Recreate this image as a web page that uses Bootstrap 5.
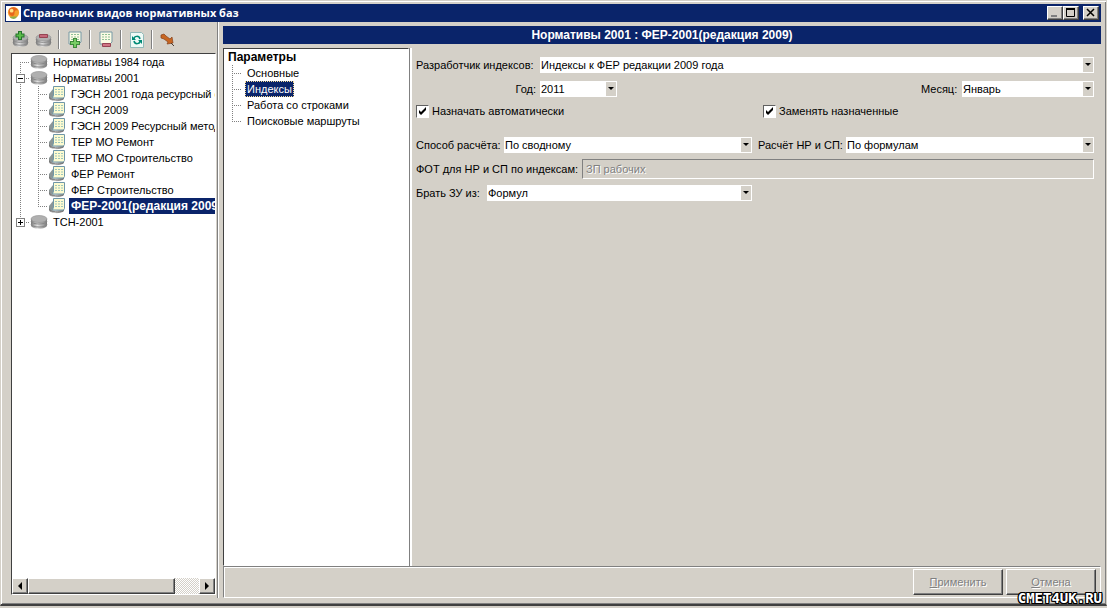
<!DOCTYPE html>
<html lang="ru">
<head>
<meta charset="utf-8">
<meta name="viewport" content="width=device-width, initial-scale=1">
<title>Справочник видов нормативных баз</title>
<link href="https://cdn.jsdelivr.net/npm/bootstrap@5.3.0/dist/css/bootstrap.min.css" rel="stylesheet">
<script src="https://cdn.jsdelivr.net/npm/bootstrap@5.3.0/dist/js/bootstrap.bundle.min.js" defer></script>
<style>
:root { --face:#d4d0c8; --navy:#0a246a; --shade:#808080; --edge:#404040; }
body { font:11px/16px "Liberation Sans",Arial,sans-serif; color:#000; background:var(--face); }
svg { display:block; flex:none; }
.window { border:1px solid #d4d0c8; border-bottom:2px solid #404040; box-shadow:inset 1px 1px #fff, inset -1px -1px #808080; padding:3px 5px 6px 4px; margin-bottom:2px; }
.titlebar { background:var(--navy); color:#fff; height:18px; padding:0 2px 0 1px; font:bold 11px/18px "Open Sans","Noto Sans",sans-serif; }
.title-text { margin-left:2px; }
.win-btn { width:16px; height:14px; }
.raised { background:var(--face); border:1px solid; border-color:#fff #404040 #404040 #fff; box-shadow:inset -1px -1px #808080; border-radius:0; padding:0; display:flex; align-items:center; justify-content:center; color:#000; }
.left-pane { width:214px; border-right:1px solid #fff; box-shadow:inset -1px 0 #808080; padding:4px 2px 3px 6px; }
.tools { height:27px; margin-left:-2px; }
.tools button { background:none; border:0; padding:0; width:23px; height:24px; display:flex; align-items:center; justify-content:center; }
.tool-line { width:2px; height:19px; background:#808080; border-right:1px solid #fff; margin:0 3px; }
.sunken { background:#fff; border:1px solid; border-color:#404040 #fff #fff #404040; }
.tree-row { display:flex; height:16px; white-space:nowrap; }
.twig { --v:repeating-linear-gradient(#808080 0 1px,transparent 1px 2px); --h:repeating-linear-gradient(90deg,#808080 0 1px,transparent 1px 2px);
  flex:none; width:18px; height:16px; background-repeat:no-repeat; display:flex; align-items:center; padding-left:4px; }
.t-mid { background-image:var(--v),var(--h); background-position:8px 0,8px 8px; background-size:1px 16px,10px 1px; }
.t-last { background-image:var(--v),var(--h); background-position:8px 0,8px 8px; background-size:1px 8px,10px 1px; }
.t-first { background-image:var(--v),var(--h); background-position:8px 8px,8px 8px; background-size:1px 8px,10px 1px; }
.t-pass { background-image:var(--v); background-position:8px 0; background-size:1px 16px; }
.toggle { width:9px; height:9px; border:1px solid #808080; background:#fff; padding:0; display:block; }
.tree-name { padding:0 2px; margin-left:3px; }
.strong-text { font-size:12px; font-weight:bold; }
.picked { background:var(--navy); color:#fff; }
.scroller { height:16px; }
.scroller button { width:16px; }
.thumb { flex:0 1 147px; }
.track { background:repeating-conic-gradient(#fff 0 25%,#d4d0c8 0 50%) 0 0/2px 2px; }
.heading { background:var(--navy); color:#fff; font-size:12px; line-height:18px; font-weight:bold; }
.params { width:186px; margin-right:1px; }
.focused { outline:1px dotted #f5db95; outline-offset:-1px; }
.form-area { border-left:2px solid #fff; box-shadow:-1px 0 #808080; padding:9px 7px 0 4px; }
.line { display:flex; align-items:center; margin-bottom:8px; }
.line.near { margin-bottom:6px; }
.line.far { margin-bottom:18px; }
.pair { gap:6px; }
.half { flex:1 1 0; display:flex; align-items:center; min-width:0; }
.lab { flex:none; white-space:nowrap; }
.w-a { width:124px; } .w-b { width:88px; } .w-c { width:71px; } .w-d { width:166px; } .w-e { width:41px; }
.pick { appearance:none; border:0; border-radius:0; height:16px; padding:0 12px 0 1px; font:inherit; color:#000; min-width:0;
  background:#fff url("data:image/svg+xml,%3Csvg xmlns='http://www.w3.org/2000/svg' width='10' height='14'%3E%3Crect width='10' height='14' fill='%23d4d0c8'/%3E%3Cpath d='M2 5h6L5 8z'/%3E%3C/svg%3E") right 1px center no-repeat; }
.year { width:77px; } .month { width:132px; }
.tick { appearance:none; width:13px; height:13px; margin:0 3px 0 0; border:1px solid; border-color:#606060 #fff #fff #606060; background:#fff; flex:none; }
.tick:checked { background:#fff url("data:image/svg+xml,%3Csvg xmlns='http://www.w3.org/2000/svg' width='11' height='11'%3E%3Cpath d='M2 4v3l2 2 5-5V1L4 6z'/%3E%3C/svg%3E") center no-repeat; }
.fixed-text { height:20px; border:1px solid; border-color:#808080 #fff #fff #808080; background:var(--face); color:#808080; font:inherit; padding:0 3px; min-width:0; text-shadow:1px 1px #fff; }
.actions { border:1px solid; border-color:#808080 #fff #fff #808080; box-shadow:inset 1px 1px #fff; height:32px; padding:2px 4px 2px 0; gap:3px; }
.actions button { width:90px; color:#808080; text-shadow:1px 1px #fff; }
.site-mark { position:absolute; right:5px; bottom:3px; font:bold 14px/14px "DejaVu Sans Mono",monospace; color:#fff; text-decoration:none;
  text-shadow:1px 0 #000,-1px 0 #000,0 1px #000,0 -1px #000,1px 1px #000,-1px -1px #000,1px -1px #000,-1px 1px #000; }
</style>
</head>
<body class="vh-100 d-flex flex-column overflow-hidden position-relative">
<svg width="0" height="0" class="position-absolute">
  <defs>
    <linearGradient id="steel"><stop offset="0" stop-color="#777"/><stop offset=".4" stop-color="#e2e2e2"/><stop offset="1" stop-color="#777"/></linearGradient>
    <symbol id="db" viewBox="0 0 18 16"><path d="M1 5v6c0 5 16 5 16 0V5z" fill="url(#steel)"/><path d="M1 7c0 4 16 4 16 0M1 10c0 4 16 4 16 0" fill="none" stroke="#888"/><ellipse cx="9" cy="5" rx="8" ry="3.5" fill="#b0b0b0" stroke="#8d8d8d" stroke-width=".6"/></symbol>
    <symbol id="sheet" viewBox="0 0 14 14"><path d="M1 1h12v10l-2 2H1z" fill="#fbfbe4" stroke="#7799a5"/><path d="M3 3.5h8M3 6h8M3 8.5h8" stroke="#8fbf98" stroke-dasharray="2 1"/></symbol>
    <symbol id="base" viewBox="0 0 18 16"><path d="M1 8v4c1 4 12 4 15 1V7z" fill="url(#steel)"/><path d="M1 8l4-5v9c-2 0-4-1-4-4z" fill="#8b9696"/><path d="M1 11c2 3 10 4 14 2" fill="none" stroke="#777"/><path d="M5.500 .5h11v10l-1 1.500H4.500l1-3z" fill="#fdfbd0" stroke="#6f97a8"/><path d="M7 3.500h8M7 6h8M7 8.500h8" stroke="#9cc5bd" stroke-dasharray="2 1"/></symbol>
  </defs>
</svg>
<main class="window flex-grow-1 d-flex flex-column overflow-hidden">
  <header class="titlebar d-flex align-items-center flex-shrink-0">
    <svg width="15" height="15" viewBox="0 0 16 16"><path fill="#fff" d="M0 0h16v16H0z"/><circle cx="8" cy="7" r="6" fill="#f5a02c"/><path d="M3 4c3-4 8-3 10 1-3-1-4 0-4 3 0 4-5 3-6 0z" fill="#e7661d"/><circle cx="6" cy="5" r="2" fill="#ffe28a"/><path d="M4 12c3 3 7 2 8-1-3 1-6-1-8 1z" fill="#8fae4b"/></svg>
    <span class="title-text me-auto">Справочник видов нормативных баз</span>
    <button class="raised win-btn" aria-label="Свернуть"><svg width="12" height="10"><path d="M2 8h6" stroke="#808080" stroke-width="2"/></svg></button>
    <button class="raised win-btn" aria-label="Развернуть"><svg width="12" height="10"><path d="M1.500 1.500h8v7h-8z" fill="none" stroke="#000"/><path d="M1 1h9" stroke="#000" stroke-width="2"/></svg></button>
    <button class="raised win-btn ms-1" aria-label="Закрыть"><svg width="12" height="10"><path d="M2 1l7 7M9 1L2 8" stroke="#000" stroke-width="1.500"/></svg></button>
  </header>
  <div class="flex-grow-1 d-flex overflow-hidden">
    <aside class="left-pane d-flex flex-column flex-shrink-0">
      <div class="tools d-flex align-items-center">
        <button aria-label="Добавить базу"><svg width="18" height="18"><use href="#db" y="2" width="17" height="15"/><path d="M8 0v9M3.500 4.500h9" stroke="#27732e" stroke-width="4"/><path d="M8 1v7M4.500 4.500h7" stroke="#5abd49" stroke-width="2"/></svg></button>
        <button aria-label="Удалить базу"><svg width="18" height="18"><use href="#db" y="2" width="17" height="15"/><path d="M4.500 3.500h8v3h-8z" fill="#c4687a" stroke="#964453"/></svg></button>
        <span class="tool-line"></span>
        <button aria-label="Добавить вид"><svg width="18" height="18"><use href="#sheet" x="2" width="14" height="14"/><path d="M9 7v10M4 12h10" stroke="#3d893a" stroke-width="4"/><path d="M9 8v8M5 12h8" stroke="#78cc64" stroke-width="2"/></svg></button>
        <span class="tool-line"></span>
        <button aria-label="Удалить вид"><svg width="18" height="18"><use href="#sheet" x="2" width="14" height="14"/><path d="M5.500 12.500h8v3h-8z" fill="#d07584" stroke="#964453"/></svg></button>
        <span class="tool-line"></span>
        <button aria-label="Обновить"><svg width="16" height="16"><path d="M1.500 .5h11l2 2v13h-13z" fill="#eefaf6" stroke="#91b9b8"/><path d="M11 7c-1-4-6-3-6 0M5 9c1 4 6 3 6 0" fill="none" stroke="#008a76" stroke-width="1.500"/><path d="M3 4v4h4zM13 12V8H9z" fill="#008a76"/></svg></button>
        <span class="tool-line"></span>
        <button aria-label="Закрепить"><svg width="18" height="16"><path d="M2 3l3-1 2 2 4 3 2-2 1 6-6 1 1-2-4-3-3-1z" fill="#c76622" stroke="#87401a" stroke-width=".7"/><path d="M12 11l3 3" stroke="#493b32"/></svg></button>
      </div>
      <div class="sunken flex-grow-1 d-flex flex-column overflow-hidden">
        <div class="flex-grow-1 overflow-hidden" role="tree">
          <div class="tree-row" role="treeitem"><span class="twig t-first"></span><svg width="18" height="16"><use href="#db"/></svg><span class="tree-name">Нормативы 1984 года</span></div>
          <div class="tree-row" role="treeitem"><span class="twig t-mid"><button class="toggle" aria-label="Свернуть ветвь"><svg width="7" height="7"><path d="M1 3.500h5" stroke="#000"/></svg></button></span><svg width="18" height="16"><use href="#db"/></svg><span class="tree-name">Нормативы 2001</span></div>
          <div class="tree-row" role="treeitem"><span class="twig t-pass"></span><span class="twig t-mid"></span><svg width="18" height="16"><use href="#base"/></svg><span class="tree-name">ГЭСН 2001 года ресурсный с</span></div>
          <div class="tree-row" role="treeitem"><span class="twig t-pass"></span><span class="twig t-mid"></span><svg width="18" height="16"><use href="#base"/></svg><span class="tree-name">ГЭСН 2009</span></div>
          <div class="tree-row" role="treeitem"><span class="twig t-pass"></span><span class="twig t-mid"></span><svg width="18" height="16"><use href="#base"/></svg><span class="tree-name">ГЭСН 2009 Ресурсный метод</span></div>
          <div class="tree-row" role="treeitem"><span class="twig t-pass"></span><span class="twig t-mid"></span><svg width="18" height="16"><use href="#base"/></svg><span class="tree-name">ТЕР МО Ремонт</span></div>
          <div class="tree-row" role="treeitem"><span class="twig t-pass"></span><span class="twig t-mid"></span><svg width="18" height="16"><use href="#base"/></svg><span class="tree-name">ТЕР МО Строительство</span></div>
          <div class="tree-row" role="treeitem"><span class="twig t-pass"></span><span class="twig t-mid"></span><svg width="18" height="16"><use href="#base"/></svg><span class="tree-name">ФЕР Ремонт</span></div>
          <div class="tree-row" role="treeitem"><span class="twig t-pass"></span><span class="twig t-mid"></span><svg width="18" height="16"><use href="#base"/></svg><span class="tree-name">ФЕР Строительство</span></div>
          <div class="tree-row" role="treeitem" aria-selected="true"><span class="twig t-pass"></span><span class="twig t-last"></span><svg width="18" height="16"><use href="#base"/></svg><span class="tree-name picked strong-text">ФЕР-2001(редакция 2009)</span></div>
          <div class="tree-row" role="treeitem"><span class="twig t-last"><button class="toggle" aria-label="Раскрыть ветвь"><svg width="7" height="7"><path d="M1 3.500h5M3.500 1v5" stroke="#000"/></svg></button></span><svg width="18" height="16"><use href="#db"/></svg><span class="tree-name">ТСН-2001</span></div>
        </div>
        <div class="scroller d-flex flex-shrink-0">
          <button class="raised" aria-label="Влево"><svg width="8" height="8"><path d="M6 0v8L2 4z"/></svg></button>
          <div class="raised thumb"></div><div class="track flex-grow-1"></div>
          <button class="raised" aria-label="Вправо"><svg width="8" height="8"><path d="M2 0v8l4-4z"/></svg></button>
        </div>
      </div>
    </aside>
    <section class="flex-grow-1 d-flex flex-column overflow-hidden ps-1 pt-1">
      <h1 class="heading text-center mb-0 flex-shrink-0">Нормативы 2001 : ФЕР-2001(редакция 2009)</h1>
      <div class="flex-grow-1 d-flex overflow-hidden pt-1">
        <nav class="sunken params flex-shrink-0" role="tree">
          <div class="tree-row strong-text ps-1" role="treeitem">Параметры</div>
          <div class="tree-row" role="treeitem"><span class="twig t-mid"></span><span class="tree-name">Основные</span></div>
          <div class="tree-row" role="treeitem" aria-selected="true"><span class="twig t-mid"></span><span class="tree-name picked focused">Индексы</span></div>
          <div class="tree-row" role="treeitem"><span class="twig t-mid"></span><span class="tree-name">Работа со строками</span></div>
          <div class="tree-row" role="treeitem"><span class="twig t-last"></span><span class="tree-name">Поисковые маршруты</span></div>
        </nav>
        <form class="form-area flex-grow-1">
          <div class="line"><label class="lab w-a" for="dev">Разработчик индексов:</label><select id="dev" class="pick flex-grow-1"><option>Индексы к ФЕР редакции 2009 года</option></select></div>
          <div class="line near"><label class="lab w-a text-end pe-1" for="year">Год:</label><select id="year" class="pick year me-auto"><option>2011</option></select><label class="lab w-e" for="month">Месяц:</label><select id="month" class="pick month"><option>Январь</option></select></div>
          <div class="line far"><div class="half"><input class="tick" type="checkbox" id="auto" checked><label for="auto">Назначать автоматически</label></div><div class="half ps-3"><input class="tick" type="checkbox" id="repl" checked><label for="repl">Заменять назначенные</label></div></div>
          <div class="line near pair"><div class="half"><label class="lab w-b" for="way">Способ расчёта:</label><select id="way" class="pick flex-grow-1"><option>По сводному</option></select></div><div class="half"><label class="lab w-b" for="nr">Расчёт НР и СП:</label><select id="nr" class="pick flex-grow-1"><option>По формулам</option></select></div></div>
          <div class="line near"><label class="lab w-d" for="fot">ФОТ для НР и СП по индексам:</label><input id="fot" class="fixed-text flex-grow-1" value="ЗП рабочих" disabled></div>
          <div class="line pair"><div class="half"><label class="lab w-c" for="zu">Брать ЗУ из:</label><select id="zu" class="pick flex-grow-1"><option>Формул</option></select></div><div class="half"></div></div>
        </form>
      </div>
      <footer class="actions d-flex justify-content-end flex-shrink-0">
        <button class="raised" disabled><span><u>П</u>рименить</span></button>
        <button class="raised" disabled><span><u>О</u>тмена</span></button>
      </footer>
    </section>
  </div>
</main>
<a class="site-mark" href="#">CMET4UK.RU</a>
</body>
</html>
